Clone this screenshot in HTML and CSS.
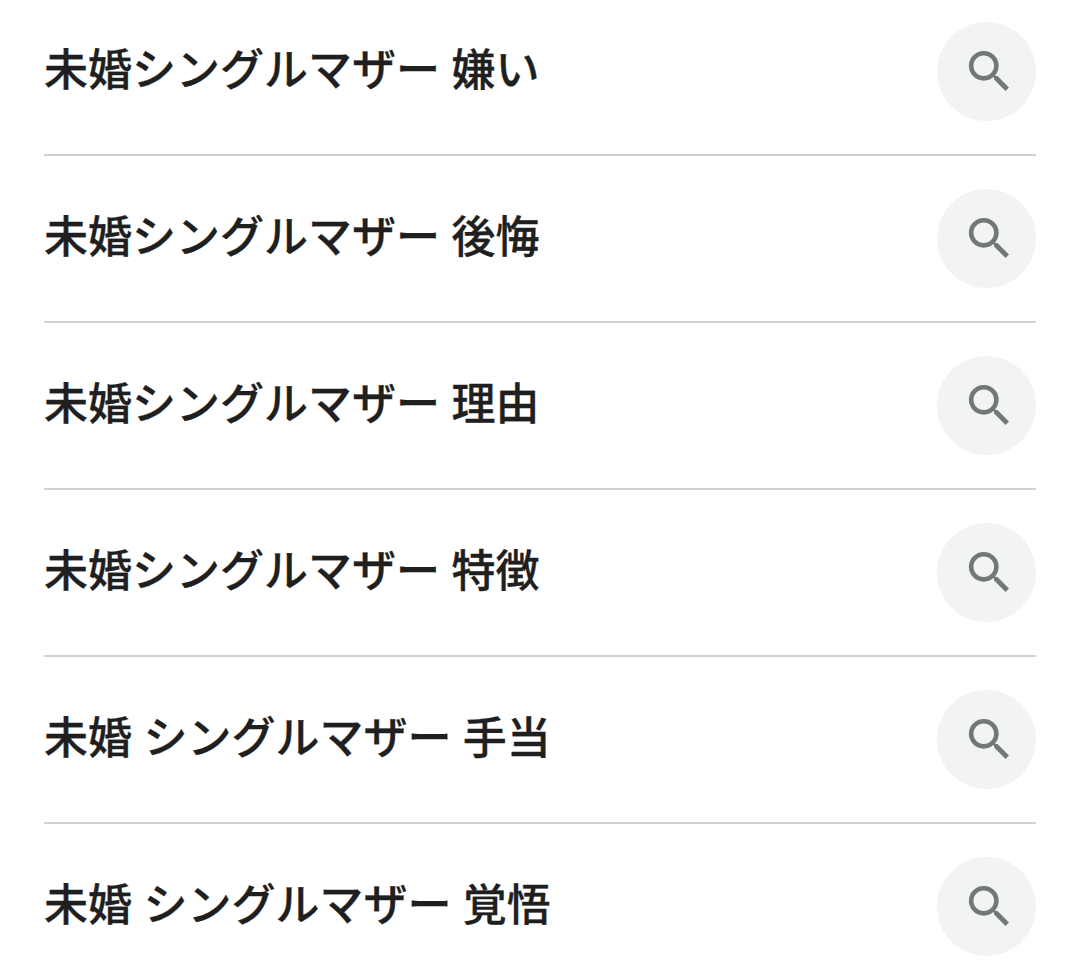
FILE: index.html
```html
<!DOCTYPE html>
<html lang="ja">
<head>
<meta charset="utf-8">
<title>関連キーワード</title>
<link rel="stylesheet" href="styles.css">
</head>
<body>
<svg class="defs" aria-hidden="true"><symbol id="search" viewBox="0 0 24 24"><path d="M15.5 14h-.79l-.28-.27A6.47 6.47 0 0 0 16 9.5 6.5 6.5 0 1 0 9.5 16c1.61 0 3.09-.59 4.23-1.57l.27.28v.79l5 4.99L20.49 19l-4.99-5zm-6 0C7.01 14 5 11.99 5 9.5S7.01 5 9.5 5 14 7.01 14 9.5 11.99 14 9.5 14z"/></symbol></svg>
<ul class="list">
<li class="row"><span class="term">未婚シングルマザー 嫌い</span><span class="button"><svg class="icon"><use href="#search"/></svg></span></li>
<li class="row"><span class="term">未婚シングルマザー 後悔</span><span class="button"><svg class="icon"><use href="#search"/></svg></span></li>
<li class="row"><span class="term">未婚シングルマザー 理由</span><span class="button"><svg class="icon"><use href="#search"/></svg></span></li>
<li class="row"><span class="term">未婚シングルマザー 特徴</span><span class="button"><svg class="icon"><use href="#search"/></svg></span></li>
<li class="row"><span class="term">未婚 シングルマザー 手当</span><span class="button"><svg class="icon"><use href="#search"/></svg></span></li>
<li class="row"><span class="term">未婚 シングルマザー 覚悟</span><span class="button"><svg class="icon"><use href="#search"/></svg></span></li>
</ul>
</body>
</html>
```
FILE: styles.css
```css
body {
  margin: 0;
  background: #fff;
  overflow: hidden;
}

.defs {
  display: none;
}

.list {
  list-style: none;
  margin: 0;
  padding: 0 44px;
}

.row {
  box-sizing: border-box;
  display: flex;
  align-items: center;
  justify-content: space-between;
  height: 167px;
  border-bottom: 2px solid #d2d2d2;
}

.row:first-child {
  height: 156px;
  padding-bottom: 11px;
}

.row:last-child {
  border-bottom: 0;
  height: 165px;
}

.term {
  padding-bottom: 2px;
  font: 500 44px/64px Roboto, "Noto Sans CJK JP", sans-serif;
  word-spacing: 0.5px;
  color: #1f1f1f;
  white-space: nowrap;
  -webkit-text-stroke: 0.3px #1f1f1f;
}

.button {
  box-sizing: border-box;
  display: flex;
  align-items: center;
  justify-content: center;
  width: 99px;
  height: 99px;
  padding-left: 6px;
  border-radius: 50%;
  background: #f1f3f5;
}

.icon {
  width: 55px;
  height: 55px;
  fill: #747778;
}
```
